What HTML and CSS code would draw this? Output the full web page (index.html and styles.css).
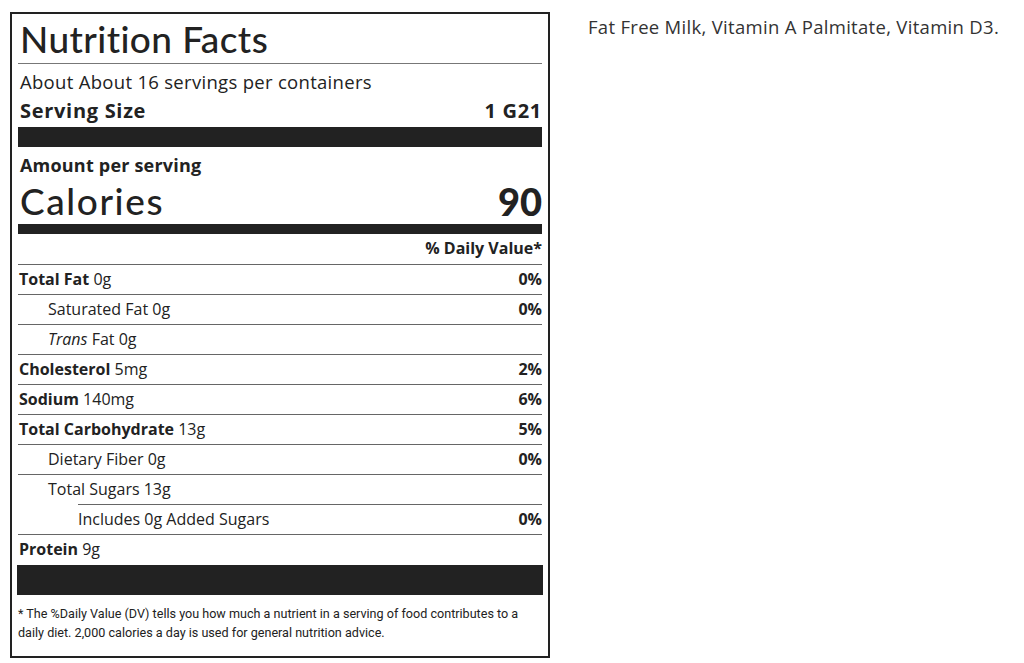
FILE: index.html
```html
<!DOCTYPE html>
<html>
<head>
<meta charset="utf-8">
<link rel="stylesheet" href="styles.css">
</head>
<body>
<div class="page">
  <section class="label">
    <h1 class="title">Nutrition Facts</h1>
    <div class="servings">About About 16 servings per containers</div>
    <div class="row-size"><span>Serving Size</span><span>1 G21</span></div>
    <div class="bar bar-lg"></div>
    <div class="amount">Amount per serving</div>
    <div class="calories"><span class="cal-label">Calories</span><span class="cal-value">90</span></div>
    <div class="bar bar-md"></div>
    <div class="row dv-head"><span></span><b>% Daily Value*</b></div>
    <div class="row"><span><b>Total Fat</b> 0g</span><b>0%</b></div>
    <div class="row indent1"><span>Saturated Fat 0g</span><b>0%</b></div>
    <div class="row indent1"><span><i>Trans</i> Fat 0g</span><span></span></div>
    <div class="row"><span><b>Cholesterol</b> 5mg</span><b>2%</b></div>
    <div class="row"><span><b>Sodium</b> 140mg</span><b>6%</b></div>
    <div class="row"><span><b>Total Carbohydrate</b> 13g</span><b>5%</b></div>
    <div class="row indent1"><span>Dietary Fiber 0g</span><b>0%</b></div>
    <div class="row indent1 no-border"><span>Total Sugars 13g</span><span></span></div>
    <div class="sub-rule"></div>
    <div class="row indent2"><span>Includes 0g Added Sugars</span><b>0%</b></div>
    <div class="row no-border"><span><b>Protein</b> 9g</span><span></span></div>
    <div class="bar bar-xl"></div>
    <p class="foot">* The %Daily Value (DV) tells you how much a nutrient in a serving of food contributes to a daily diet. 2,000 calories a day is used for general nutrition advice.</p>
  </section>
  <p class="ingredients">Fat Free Milk, Vitamin A Palmitate, Vitamin D3.</p>
</div>
</body>
</html>
```

FILE: styles.css
```css
* { box-sizing: border-box; }
html, body { margin: 0; padding: 0; background: #fff; }
body {
  font-family: "Open Sans", "Lato", sans-serif;
  color: #222;
}
.page {
  display: flex;
  align-items: flex-start;
  padding: 12px 0 0 10px;
}
.label {
  width: 540px;
  height: 646px;
  border: 2px solid #222;
  padding: 0 6px;
  display: flex;
  flex-direction: column;
}
.title {
  margin: 0;
  height: 50px;
  font-family: "Lato", sans-serif;
  font-weight: 500;
  font-size: 37px;
  line-height: 50px;
  padding-left: 2px;
  border-bottom: 1px solid #777;
  letter-spacing: 0.4px;
}
.servings {
  height: 33px;
  line-height: 36px;
  font-size: 18.5px;
  letter-spacing: 0.3px;
  padding-left: 2px;
}
.row-size {
  height: 30px;
  padding-bottom: 3px;
  display: flex;
  justify-content: space-between;
  align-items: center;
  font-weight: 700;
  font-size: 20px;
  letter-spacing: 0.7px;
  padding-left: 2px;
}
.bar { background: #222; }
.bar-lg { height: 20px; }
.bar-md { height: 10px; }
.bar-xl { height: 30px; margin: 0 -1px; }
.amount {
  height: 36px;
  line-height: 37px;
  font-weight: 700;
  font-size: 18px;
  letter-spacing: 0.2px;
  padding-left: 2px;
}
.calories {
  height: 41px;
  padding-bottom: 6px;
  display: flex;
  justify-content: space-between;
  align-items: center;
}
.cal-label {
  font-family: "Lato", sans-serif;
  font-size: 37px;
  font-weight: 500;
  padding-left: 2px;
  letter-spacing: 1.6px;
}
.cal-value {
  font-family: "Lato", sans-serif;
  font-size: 38px;
  font-weight: 900;
}
.row {
  height: 30px;
  padding-bottom: 2px;
  display: flex;
  justify-content: space-between;
  align-items: center;
  font-size: 16px;
  border-bottom: 1px solid #666;
}
.row > span:first-child { padding-left: 1px; }
.row b { font-weight: 700; }
.dv-head { height: 31px; }
.indent1 { padding-left: 29px; }
.indent2 { padding-left: 59px; }
.no-border { border-bottom: none; }
.sub-rule {
  height: 1px;
  margin-left: 60px;
  background: #666;
  margin-top: -1px;
}
.foot {
  margin: 9px 0 0;
  font-family: "Roboto", "Liberation Sans", sans-serif;
  font-size: 12.6px;
  line-height: 19px;
  color: #222;
}
.ingredients {
  margin: 2px 0 0 38px;
  font-size: 18.5px;
  letter-spacing: 0.3px;
  color: #333;
}
```
